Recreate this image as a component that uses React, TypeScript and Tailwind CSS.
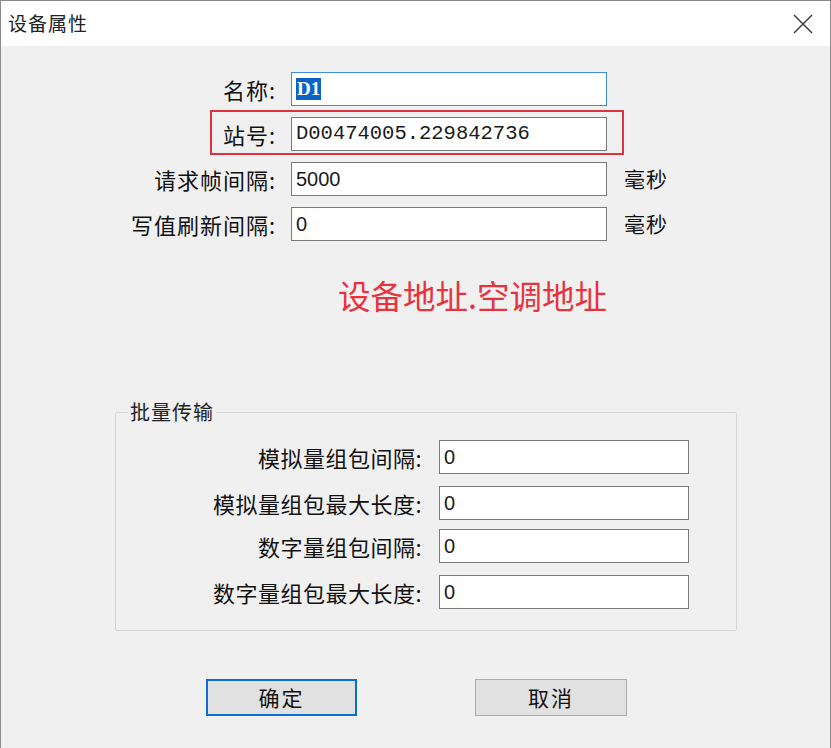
import React from 'react';

const cjk = "font-['Noto_Sans_CJK_SC','Noto_Sans',sans-serif]";

type Row = { label: string; value: string; suffix?: string; mono?: boolean };

const topRows: Row[] = [
  { label: '请求帧间隔:', value: '5000', suffix: '毫秒' },
  { label: '写值刷新间隔:', value: '0', suffix: '毫秒' },
];

const batchRows: Row[] = [
  { label: '模拟量组包间隔:', value: '0' },
  { label: '模拟量组包最大长度:', value: '0' },
  { label: '数字量组包间隔:', value: '0' },
  { label: '数字量组包最大长度:', value: '0' },
];

const Field: React.FC<{ value: string; mono?: boolean; width: string }> = ({ value, mono, width }) => (
  <div
    className={`${width} h-[34px] bg-white border border-[#7a7a7a] flex items-center pl-[4px] text-[#1a1a1a] ${
      mono ? "text-[20.5px] font-['Liberation_Mono',monospace]" : "text-[20px] font-['Liberation_Sans',sans-serif]"
    }`}
  >
    {value}
  </div>
);

export default function App() {
  return (
    <div className={`w-[831px] h-[748px] bg-[#f0f0f0] border-l border-t border-r border-[#8a8a8a] ${cjk} text-[#111] overflow-hidden`}>
      {/* title bar */}
      <div className="h-[45px] bg-white flex items-center justify-between pl-[7px] pr-[17px]">
        <span className="text-[19px] text-[#222] tracking-[1px]">设备属性</span>
        <svg width="20" height="20" viewBox="0 0 20 20">
          <path d="M1 1 L19 19 M19 1 L1 19" stroke="#333" strokeWidth="1.4" fill="none" />
        </svg>
      </div>

      {/* top form */}
      <div className="flex flex-col gap-[11px] pt-[26px]">
        <div className="flex items-center">
          <div className="w-[275px] text-right text-[22px] tracking-[1px]">名称:</div>
          <div className="ml-[15px] w-[316px] h-[34px] bg-white border border-[#3c8fe0] flex items-center pl-[4px]">
            <span className="bg-[#0a64c8] text-white text-[19px] leading-[22px] font-['Liberation_Serif',serif] font-bold px-[1px]">D1</span>
          </div>
        </div>

        <div className="relative flex items-center">
          <div className="absolute left-[209px] top-[-7px] w-[414px] h-[45px] border-2 border-[#e0323c]" />
          <div className="w-[275px] text-right text-[22px] tracking-[1px]">站号:</div>
          <div className="ml-[15px]">
            <Field value="D00474005.229842736" mono width="w-[316px]" />
          </div>
        </div>

        {topRows.map((r) => (
          <div key={r.label} className="flex items-center">
            <div className="w-[275px] text-right text-[22px] tracking-[1px] whitespace-nowrap">{r.label}</div>
            <div className="ml-[15px]">
              <Field value={r.value} width="w-[316px]" />
            </div>
            <div className="ml-[17px] text-[21px] tracking-[1px]">{r.suffix}</div>
          </div>
        ))}
      </div>

      {/* annotation */}
      <div className="mt-[34px] pl-[337px] text-[32.5px] leading-[40px] text-[#e8323c]">设备地址.空调地址</div>

      {/* batch group */}
      <fieldset className="ml-[114px] mt-[85px] w-[622px] h-[231px] border border-[#d6d6d6] rounded-[2px] px-0">
        <legend className="ml-[12px] px-[2px] text-[20px] leading-[24px] tracking-[1px] text-[#222]">批量传输</legend>
        <div className="flex flex-col pt-[16px]">
          {batchRows.map((r, i) => (
            <div key={r.label} className={`flex items-center ${i === 0 ? '' : i === 2 ? 'mt-[9px]' : 'mt-[12px]'}`}>
              <div className="w-[306px] text-right text-[22px] tracking-[0.5px] whitespace-nowrap">{r.label}</div>
              <div className="ml-[17px]">
                <Field value={r.value} width="w-[250px]" />
              </div>
            </div>
          ))}
        </div>
      </fieldset>

      {/* buttons */}
      <div className="flex items-center mt-[48px]">
        <button className="ml-[205px] w-[151px] h-[37px] bg-[#e1e1e1] border-2 border-[#0a6ed1] text-[21px] tracking-[2px]">
          确定
        </button>
        <button className="ml-[118px] w-[152px] h-[37px] bg-[#e1e1e1] border border-[#adadad] text-[21px] tracking-[2px]">
          取消
        </button>
      </div>
    </div>
  );
}
